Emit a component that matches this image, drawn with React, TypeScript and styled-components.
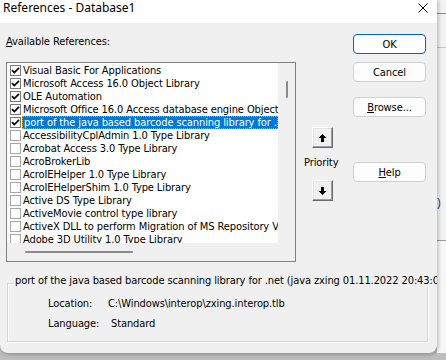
import React from 'react';
import styled, { createGlobalStyle } from 'styled-components';

const GlobalStyle = createGlobalStyle`
  html, body {
    margin: 0;
    padding: 0;
  }
  body {
    width: 446px;
    height: 360px;
    overflow: hidden;
    background: #c8c8c8;
  }
`;

const uiFont = `"DejaVu Sans Condensed", "DejaVu Sans", sans-serif`;

const Screen = styled.div`
  display: flex;
  align-items: flex-start;
  width: 446px;
  height: 360px;
  background: linear-gradient(#d6d6d6, #bdbdbd);
`;

const Dialog = styled.div`
  position: relative;
  z-index: 1;
  width: 437px;
  height: 353px;
  display: flex;
  flex-direction: column;
  background: #f0f0f0;
  border-radius: 0 0 8px 8px;
  box-shadow: 1px 1px 4px rgba(0, 0, 0, 0.3);
  overflow: hidden;
  font-family: ${uiFont};
  font-size: 11px;
  letter-spacing: -0.1px;
  color: #000;
`;

const TitleBar = styled.div`
  height: 23px;
  flex-shrink: 0;
  display: flex;
  justify-content: space-between;
  align-items: flex-start;
  padding: 0 9px 0 3px;
  background: #fff;
`;

const Title = styled.div`
  font-family: "Noto Sans", "Open Sans", sans-serif;
  font-size: 12px;
  line-height: 16px;
  letter-spacing: 0;
`;

const CloseIcon = styled.svg`
  margin-top: 3px;
`;

const Body = styled.div`
  flex: 1;
  display: flex;
  flex-direction: column;
  padding-left: 6px;
`;

const TopRow = styled.div`
  display: flex;
`;

const LeftCol = styled.div`
  width: 290px;
  padding-top: 12px;
  display: flex;
  flex-direction: column;
`;

const FieldLabel = styled.div`
  height: 13px;
  line-height: 13px;
  margin-bottom: 14px;
`;

const Key = styled.span`
  text-decoration: underline;
  text-underline-offset: 1px;
`;

const ListBox = styled.div`
  box-sizing: border-box;
  width: 290px;
  height: 200px;
  border: 1px solid #828282;
  background: #f0f0f0;
  display: grid;
  grid-template-columns: 271px 17px;
  grid-template-rows: 180px 17px;
`;

const Items = styled.div`
  background: #fff;
  overflow: hidden;
  padding-top: 1px;
`;

const Item = styled.div`
  height: 13px;
  display: flex;
  align-items: center;
`;

const Check = styled.div<{ $checked?: boolean }>`
  box-sizing: border-box;
  flex-shrink: 0;
  width: 11px;
  height: 11px;
  margin-left: 3px;
  border: 1px solid ${(p) => (p.$checked ? '#7a7a7a' : '#a6a6a6')};
  background: #fff;
  display: flex;
  align-items: center;
  justify-content: center;
`;

const ItemText = styled.div<{ $selected?: boolean }>`
  box-sizing: border-box;
  margin-left: 1px;
  padding: 0 1px;
  height: ${(p) => (p.$selected ? '13px' : 'auto')};
  line-height: ${(p) => (p.$selected ? '11px' : '13px')};
  white-space: nowrap;
  flex: ${(p) => (p.$selected ? 1 : 'none')};
  overflow: hidden;
  background: ${(p) => (p.$selected ? '#0078d7' : 'transparent')};
  color: ${(p) => (p.$selected ? '#fff' : '#000')};
  border: ${(p) => (p.$selected ? '1px dotted #e0a040' : 'none')};
`;

const VScroll = styled.div`
  background: #f0f0f0;
  display: flex;
  justify-content: center;
`;

const VThumb = styled.div`
  width: 2px;
  height: 17px;
  margin-top: 18px;
  border-radius: 1px;
  background: #8a8a8a;
`;

const HScroll = styled.div`
  background: #f0f0f0;
  padding: 8px 0 0 18px;
`;

const HThumb = styled.div`
  width: 108px;
  height: 2px;
  border-radius: 1px;
  background: #8a8a8a;
`;

const Corner = styled.div`
  background: #f0f0f0;
`;

const PriorityCol = styled.div`
  width: 49px;
  padding: 104px 0 0 8px;
  display: flex;
  flex-direction: column;
  align-items: flex-start;
`;

const ArrowButton = styled.button<{ $gap?: number }>`
  box-sizing: border-box;
  width: 21px;
  height: 21px;
  margin: ${(p) => p.$gap ?? 0}px 0 0 8px;
  padding: 0;
  display: flex;
  align-items: center;
  justify-content: center;
  background: #f0f0f0;
  border: 1px solid;
  border-color: #fff #696969 #696969 #fff;
  box-shadow: inset -1px -1px #a0a0a0, inset 1px 1px #e3e3e3;
`;

const PriorityLabel = styled.div`
  margin-top: 8px;
  height: 13px;
  line-height: 13px;
`;

const ButtonCol = styled.div`
  width: 73px;
  padding-top: 11px;
  display: flex;
  flex-direction: column;
`;

const PushButton = styled.button<{ $gap?: number; $default?: boolean }>`
  box-sizing: border-box;
  width: 73px;
  height: 20px;
  margin-top: ${(p) => p.$gap ?? 0}px;
  padding: 0;
  font-family: ${uiFont};
  font-size: 11px;
  letter-spacing: -0.1px;
  color: #000;
  background: #fdfdfd;
  border: 1px solid ${(p) => (p.$default ? '#0067c0' : '#d0d0d0')};
  border-radius: 4px;
`;

const GroupBox = styled.div`
  box-sizing: border-box;
  width: 421px;
  height: 59px;
  margin: 21px 0 0 1px;
  border: 1px solid #d5d5d5;
  box-shadow: inset 1px 1px #fff, 1px 1px #fff;
`;

const Legend = styled.div`
  width: max-content;
  height: 13px;
  line-height: 13px;
  margin: -10px 0 0 6px;
  padding: 0 1px;
  background: #f0f0f0;
  white-space: nowrap;
`;

const InfoRow = styled.div<{ $gap: number }>`
  display: flex;
  height: 13px;
  line-height: 13px;
  margin-top: ${(p) => p.$gap}px;
  padding-left: 40px;
`;

const InfoLabel = styled.span<{ $width: number }>`
  width: ${(p) => p.$width}px;
`;

const Behind = styled.div`
  flex: 1;
  height: 353px;
  display: flex;
  flex-direction: column;
  background: #f3f3f3;
  font-family: "Noto Sans", sans-serif;
  font-size: 12px;
`;

const BehindBar = styled.div<{ $h: number; $line: string }>`
  height: ${(p) => p.$h}px;
  border-bottom: 1px solid ${(p) => p.$line};
  overflow: hidden;
`;

const BehindText = styled.div`
  margin-top: 148px;
  line-height: 14px;
  color: #1a4f9c;
`;

const Behind2 = styled.div`
  flex: 1;
  background: #f7f7f7;
`;

const CheckMark = () => (
  <svg width="9" height="9" viewBox="0 0 9 9">
    <path d="M1 4.2 L3.3 6.6 L8 1.8" fill="none" stroke="#000" strokeWidth="1.7" />
  </svg>
);

const UpArrow = ({ down }: { down?: boolean }) => (
  <svg width="7" height="8" viewBox="0 0 7 8" shapeRendering="crispEdges" style={down ? { transform: 'rotate(180deg)' } : undefined}>
    <polygon points="3.5,0 7,4 5,4 5,8 2,8 2,4 0,4" fill="#000" />
  </svg>
);

const references = [
  { name: 'Visual Basic For Applications', checked: true },
  { name: 'Microsoft Access 16.0 Object Library', checked: true },
  { name: 'OLE Automation', checked: true },
  { name: 'Microsoft Office 16.0 Access database engine Object Library', checked: true },
  { name: 'port of the java based barcode scanning library for .net (java zxing 01.11.2022 20:43:00)', checked: true, selected: true },
  { name: 'AccessibilityCplAdmin 1.0 Type Library' },
  { name: 'Acrobat Access 3.0 Type Library' },
  { name: 'AcroBrokerLib' },
  { name: 'AcroIEHelper 1.0 Type Library' },
  { name: 'AcroIEHelperShim 1.0 Type Library' },
  { name: 'Active DS Type Library' },
  { name: 'ActiveMovie control type library' },
  { name: 'ActiveX DLL to perform Migration of MS Repository V1' },
  { name: 'Adobe 3D Utility 1.0 Type Library' },
  { name: 'Adobe Acrobat 10.0 Type Library' },
];

export default function App() {
  return (
    <>
      <GlobalStyle />
      <Screen>
        <Dialog>
          <TitleBar>
            <Title>References - Database1</Title>
            <CloseIcon width="10" height="10" viewBox="0 0 10 10">
              <path d="M0.5 0.5 L9.5 9.5 M9.5 0.5 L0.5 9.5" stroke="#000" strokeWidth="1" />
            </CloseIcon>
          </TitleBar>
          <Body>
            <TopRow>
              <LeftCol>
                <FieldLabel>
                  <Key>A</Key>vailable References:
                </FieldLabel>
                <ListBox>
                  <Items>
                    {references.map((r) => (
                      <Item key={r.name}>
                        <Check $checked={r.checked}>{r.checked && <CheckMark />}</Check>
                        <ItemText $selected={r.selected}>{r.name}</ItemText>
                      </Item>
                    ))}
                  </Items>
                  <VScroll>
                    <VThumb />
                  </VScroll>
                  <HScroll>
                    <HThumb />
                  </HScroll>
                  <Corner />
                </ListBox>
              </LeftCol>
              <PriorityCol>
                <ArrowButton>
                  <UpArrow />
                </ArrowButton>
                <PriorityLabel>Priority</PriorityLabel>
                <ArrowButton $gap={11}>
                  <UpArrow down />
                </ArrowButton>
              </PriorityCol>
              <ButtonCol>
                <PushButton $default>OK</PushButton>
                <PushButton $gap={8}>Cancel</PushButton>
                <PushButton $gap={15}>
                  <Key>B</Key>rowse...
                </PushButton>
                <PushButton $gap={45}>
                  <Key>H</Key>elp
                </PushButton>
              </ButtonCol>
            </TopRow>
            <GroupBox>
              <Legend>port of the java based barcode scanning library for .net (java zxing 01.11.2022 20:43:00)</Legend>
              <InfoRow $gap={10}>
                <InfoLabel $width={60}>Location:</InfoLabel>
                <span>C:\Windows\interop\zxing.interop.tlb</span>
              </InfoRow>
              <InfoRow $gap={7}>
                <InfoLabel $width={63}>Language:</InfoLabel>
                <span>Standard</span>
              </InfoRow>
            </GroupBox>
          </Body>
        </Dialog>
        <Behind>
          <BehindBar $h={13} $line="#8a8a8a" />
          <BehindBar $h={33} $line="#c4c4c4" />
          <BehindBar $h={192} $line="#9a9a9a">
            <BehindText>)</BehindText>
          </BehindBar>
          <Behind2 />
        </Behind>
      </Screen>
    </>
  );
}
